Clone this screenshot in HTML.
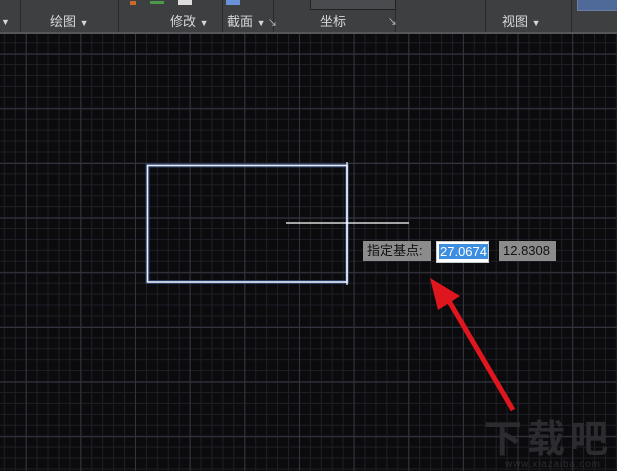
<!DOCTYPE html>
<html><head><meta charset="utf-8"><style>
html,body{margin:0;padding:0;width:617px;height:471px;overflow:hidden;background:#0b0b0e;font-family:"Liberation Sans","Noto Sans CJK SC",sans-serif}
svg{position:absolute;left:0;top:0}
.tb{position:absolute;left:0;top:0;width:617px;height:32px;background:#3e3f41;border-bottom:2px solid #56575a}
.lab{position:absolute;top:14px;color:#d8d8d8;font-size:13px;line-height:16px}
.sep{position:absolute;top:0;width:1px;height:32px;background:#2a2a2c}
.box{position:absolute;font-size:13px;line-height:20px;height:20px;padding:0 4px}
</style></head><body>
<svg width="617" height="471">
<defs>
<pattern id="g" x="3.8" y="9.4" width="10.93" height="10.93" patternUnits="userSpaceOnUse">
<path d="M0.5 0V10.93M0 0.5H10.93" stroke="#1e1e25" stroke-width="1"/></pattern>
<pattern id="G" x="25.7" y="53.7" width="54.65" height="54.65" patternUnits="userSpaceOnUse">
<path d="M0.5 0V54.65M0 0.5H54.65" stroke="#34343f" stroke-width="1"/></pattern>
</defs>
<rect width="617" height="471" fill="#0b0b0e"/>
<rect y="34" width="617" height="437" fill="url(#g)"/>
<rect y="34" width="617" height="437" fill="url(#G)"/>
<rect x="147.5" y="165.5" width="199.5" height="116.5" fill="none" stroke="#3a5a9a" stroke-width="4" opacity="0.6"/>
<rect x="147.5" y="165.5" width="199.5" height="116.5" fill="none" stroke="#e8eefa" stroke-width="1.6"/>
<line x1="347" y1="162" x2="347" y2="285" stroke="#fff" stroke-width="1.2"/>
<line x1="286" y1="223" x2="409" y2="223" stroke="#fff" stroke-width="1.2"/>
<text x="484" y="452" font-size="38" font-weight="bold" fill="#2c2c30" font-family="Noto Sans CJK SC" textLength="124">下载吧</text>
<text x="505" y="467" font-size="10" fill="#2c2c30" textLength="95">www.xiazaiba.com</text>
<line x1="513" y1="410" x2="446" y2="296" stroke="#e0161e" stroke-width="5"/>
<polygon points="430,278 460,296 438,310" fill="#e0161e"/>
</svg>
<div class="tb">
<div class="sep" style="left:20px"></div><div class="sep" style="left:118px"></div><div class="sep" style="left:222px"></div><div class="sep" style="left:273px"></div><div class="sep" style="left:395px"></div><div class="sep" style="left:485px"></div><div class="sep" style="left:571px"></div>
<div class="lab" style="left:1px;font-size:9px">▼</div>
<div class="lab" style="left:50px">绘图 <span style="font-size:9px">▼</span></div>
<div class="lab" style="left:170px">修改 <span style="font-size:9px">▼</span></div>
<div class="lab" style="left:227px">截面 <span style="font-size:9px">▼ ↘</span></div>
<div class="lab" style="left:320px">坐标</div><div class="lab" style="left:388px;font-size:9px">↘</div>
<div class="lab" style="left:502px">视图 <span style="font-size:9px">▼</span></div>
<div style="position:absolute;left:310px;top:0;width:84px;height:9px;border:1px solid #222;border-top:none;background:#4a4b4e"></div>
<div style="position:absolute;left:577px;top:0;width:40px;height:10px;background:#4f6a98;border:1px solid #6a7ea6;border-top:none"></div>
<div style="position:absolute;left:130px;top:1px;width:6px;height:4px;background:#c86a2a"></div>
<div style="position:absolute;left:150px;top:1px;width:14px;height:3px;background:#4a9a4a"></div>
<div style="position:absolute;left:178px;top:0;width:14px;height:5px;background:#ddd"></div>
<div style="position:absolute;left:226px;top:0;width:14px;height:5px;background:#6a90d8"></div>
</div>
<div class="box" style="left:363px;top:241px;width:60px;background:#8c8c8c;color:#111">指定基点:</div>
<div class="box" style="left:436px;top:241px;width:49px;background:#fff;border:1px solid #ccc;padding:0 0 0 2px"><span style="background:#3d8ee0;color:#fff;padding:0 1px">27.0674</span></div>
<div class="box" style="left:499px;top:241px;width:49px;background:#8c8c8c;color:#111">12.8308</div>
</body></html>
